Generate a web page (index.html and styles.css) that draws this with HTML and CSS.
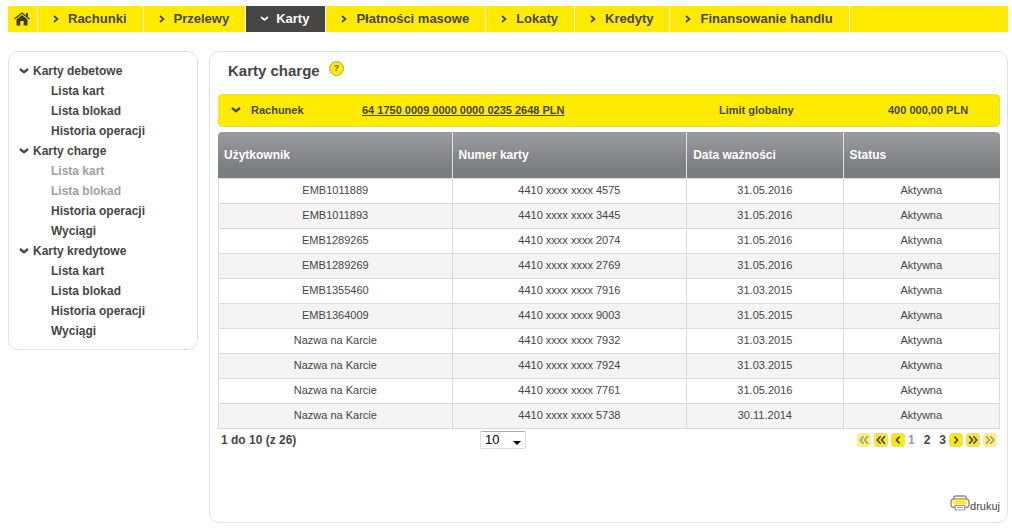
FILE: index.html
```html
<!DOCTYPE html>
<html lang="pl">
<head>
<meta charset="utf-8">
<title>Karty charge</title>
<link rel="stylesheet" href="styles.css">
</head>
<body>
<svg class="defs" aria-hidden="true">
  <symbol id="right" viewBox="0 0 6 8"><path d="M1 1l3.5 3L1 7" fill="none" stroke="currentColor" stroke-width="1.7"/></symbol>
  <symbol id="down" viewBox="0 0 10 6"><path d="M1 1l4 3.2L9 1" fill="none" stroke="currentColor" stroke-width="2.3"/></symbol>
  <symbol id="one" viewBox="0 0 14 14"><path d="M8.8 3L5.2 7l3.6 4" fill="none" stroke="currentColor" stroke-width="2"/></symbol>
  <symbol id="two" viewBox="0 0 14 14"><path d="M6.6 2.500L2.600 7l4 4.500M11.600 2.500L7.600 7l4 4.500" fill="none" stroke="currentColor" stroke-width="1.8"/></symbol>
</svg>
<nav class="topnav">
  <a class="tab home" href="#" aria-label="Start"><svg viewBox="0 0 16 14"><path d="M0.5 7L8 1l7.500 6" fill="none" stroke="currentColor" stroke-width="1.3"/><path d="M12 1h2v4l-2-1.600zM8 3l5.500 4.600V13.500H9.700V9H6.300v4.500H2.500V7.600z" fill="currentColor"/></svg></a>
  <a class="tab" href="#"><svg class="chev"><use href="#right"/></svg>Rachunki</a>
  <a class="tab" href="#"><svg class="chev"><use href="#right"/></svg>Przelewy</a>
  <a class="tab active" href="#"><svg class="chev wide" viewBox="0 0 9 6"><path d="M1 1l3.500 3L8 1" fill="none" stroke="currentColor" stroke-width="1.700"/></svg>Karty</a>
  <a class="tab" href="#"><svg class="chev"><use href="#right"/></svg>Płatności masowe</a>
  <a class="tab" href="#"><svg class="chev"><use href="#right"/></svg>Lokaty</a>
  <a class="tab" href="#"><svg class="chev"><use href="#right"/></svg>Kredyty</a>
  <a class="tab" href="#"><svg class="chev"><use href="#right"/></svg>Finansowanie handlu</a>
</nav>
<div class="layout">
  <aside class="panel sidebar">
    <a class="group" href="#"><svg class="down"><use href="#down"/></svg>Karty debetowe</a>
    <a class="item" href="#">Lista kart</a>
    <a class="item" href="#">Lista blokad</a>
    <a class="item" href="#">Historia operacji</a>
    <a class="group" href="#"><svg class="down"><use href="#down"/></svg>Karty charge</a>
    <a class="item muted" href="#">Lista kart</a>
    <a class="item muted" href="#">Lista blokad</a>
    <a class="item" href="#">Historia operacji</a>
    <a class="item" href="#">Wyciągi</a>
    <a class="group" href="#"><svg class="down"><use href="#down"/></svg>Karty kredytowe</a>
    <a class="item" href="#">Lista kart</a>
    <a class="item" href="#">Lista blokad</a>
    <a class="item" href="#">Historia operacji</a>
    <a class="item" href="#">Wyciągi</a>
  </aside>
  <main class="panel content">
    <header class="heading"><h1>Karty charge</h1><button class="help" type="button">?</button></header>
    <section class="account">
      <svg class="down"><use href="#down"/></svg>
      <span>Rachunek</span>
      <a href="#">64 1750 0009 0000 0000 0235 2648 PLN</a>
      <span>Limit globalny</span>
      <span>400 000,00 PLN</span>
    </section>
    <table class="cards">
      <thead><tr><th class="c30">Użytkownik</th><th class="c30">Numer karty</th><th class="c20">Data ważności</th><th class="c20">Status</th></tr></thead>
      <tbody>
        <tr><td>EMB1011889</td><td>4410 xxxx xxxx 4575</td><td>31.05.2016</td><td>Aktywna</td></tr>
        <tr><td>EMB1011893</td><td>4410 xxxx xxxx 3445</td><td>31.05.2016</td><td>Aktywna</td></tr>
        <tr><td>EMB1289265</td><td>4410 xxxx xxxx 2074</td><td>31.05.2016</td><td>Aktywna</td></tr>
        <tr><td>EMB1289269</td><td>4410 xxxx xxxx 2769</td><td>31.05.2016</td><td>Aktywna</td></tr>
        <tr><td>EMB1355460</td><td>4410 xxxx xxxx 7916</td><td>31.03.2015</td><td>Aktywna</td></tr>
        <tr><td>EMB1364009</td><td>4410 xxxx xxxx 9003</td><td>31.05.2015</td><td>Aktywna</td></tr>
        <tr><td>Nazwa na Karcie</td><td>4410 xxxx xxxx 7932</td><td>31.03.2015</td><td>Aktywna</td></tr>
        <tr><td>Nazwa na Karcie</td><td>4410 xxxx xxxx 7924</td><td>31.03.2015</td><td>Aktywna</td></tr>
        <tr><td>Nazwa na Karcie</td><td>4410 xxxx xxxx 7761</td><td>31.05.2016</td><td>Aktywna</td></tr>
        <tr><td>Nazwa na Karcie</td><td>4410 xxxx xxxx 5738</td><td>30.11.2014</td><td>Aktywna</td></tr>
      </tbody>
    </table>
    <footer class="pager">
      <span class="range">1 do 10 (z 26)</span>
      <div class="size"><select aria-label="Liczba wierszy"><option>10</option><option>20</option><option>50</option></select><svg viewBox="0 0 8 4"><path d="M0 0h8L4 4z"/></svg></div>
      <div class="pages">
        <button class="step off" type="button" aria-label="Pierwsza strona" disabled><svg><use href="#two"/></svg></button>
        <button class="step mid" type="button" aria-label="Poprzednie strony"><svg><use href="#two"/></svg></button>
        <button class="step" type="button" aria-label="Poprzednia strona"><svg><use href="#one"/></svg></button>
        <span class="numbers"><a class="current" href="#">1</a><a href="#">2</a><a href="#">3</a></span>
        <button class="step next" type="button" aria-label="Następna strona"><svg><use href="#one"/></svg></button>
        <button class="step next mid" type="button" aria-label="Następne strony"><svg><use href="#two"/></svg></button>
        <button class="step next off" type="button" aria-label="Ostatnia strona" disabled><svg><use href="#two"/></svg></button>
      </div>
    </footer>
    <a class="print" href="#"><svg viewBox="0 0 20 16"><rect x="3.700" y="1" width="12.600" height="7" rx="2" fill="#fff" stroke="#8e8e8e" stroke-width="1.400"/><rect x="1" y="4" width="18" height="8.500" rx="3" fill="#fff" stroke="#8e8e8e" stroke-width="1.400"/><path d="M3.500 4.500h13v5h-13z" fill="#ffe92c"/><path d="M5 10.500h10l-.5 4.500h-9z" fill="#fff" stroke="#9a9a9a" stroke-width="1.200"/><path d="M7 12.500h6" stroke="#aaa" stroke-width="1.200"/></svg>drukuj</a>
  </main>
</div>
</body>
</html>
```

FILE: styles.css
```css
* { box-sizing: border-box; }
body {
  margin: 0;
  padding: 6px 4px 7px 8px;
  background: #fff;
  color: #464646;
  font: 11px/16px "Liberation Sans", Arial, sans-serif;
}
a { color: inherit; text-decoration: none; }
.defs { display: none; }

.topnav {
  display: flex;
  height: 26px;
  background: #ffeb00;
  font-size: 13px;
  font-weight: bold;
}
.tab {
  display: flex;
  align-items: center;
  padding: 0 16px 0 15px;
  border-right: 1px solid #fff;
  white-space: nowrap;
}
.tab.home { padding: 0 7px 0 6px; color: #3c3a10; }
.home svg { width: 16px; height: 14px; }
.tab.active { padding-left: 14px; background: #464646; color: #fff; }
.chev { width: 6px; height: 8px; margin-right: 9px; }
.chev.wide { width: 9px; height: 6px; margin-right: 7px; }

.layout {
  display: flex;
  align-items: flex-start;
  gap: 11px;
  margin-top: 19px;
}
.panel { border: 1px solid #e2e2e2; border-radius: 10px; }
.sidebar {
  flex: 0 0 190px;
  padding: 9px 10px 8px;
  font-size: 12px;
  line-height: 20px;
  font-weight: bold;
}
.group, .item { display: flex; align-items: center; }
.group { gap: 4px; }
.item { padding-left: 32px; }
.muted { color: #a0a0a0; }
.down { flex: none; width: 10px; height: 6px; }

.content { flex: 1; min-width: 0; padding: 8px 7px 8px 8px; }
.heading { display: flex; gap: 9px; padding-left: 10px; margin-bottom: 12px; }
h1 { margin: 0; font-size: 15px; line-height: 22px; }
.help {
  width: 15px;
  height: 15px;
  margin-top: 1px;
  padding: 0;
  border: 1px solid #a8a46a;
  border-radius: 50%;
  background: #ffeb00;
  color: #6b6520;
  font: bold 9px/13px "Liberation Sans", Arial, sans-serif;
}
.account {
  display: grid;
  grid-template-columns: 20px 111px 1fr 169px 111px;
  align-items: center;
  height: 33px;
  padding: 0 0 2px 12px;
  border: 1px solid #e6dc50;
  border-radius: 4px;
  background: #ffeb00;
  font-weight: bold;
}
.account a { text-decoration: underline; }

.cards {
  width: 100%;
  margin-top: 5px;
  border-spacing: 0;
  table-layout: fixed;
}
.c30 { width: 30%; }
.c20 { width: 20%; }
th {
  height: 47px;
  padding: 0 6px;
  border-right: 1px solid #e4e4e6;
  border-bottom: 1px solid #d8dbe0;
  background: linear-gradient(#9b9c9f, #7c7d80 80%);
  color: #fff;
  font-size: 12px;
  text-align: left;
}
th:first-child { border-top-left-radius: 4px; }
th:last-child { border-top-right-radius: 4px; border-right: 0; }
td {
  height: 25px;
  padding: 0 0 2px;
  border-right: 1px solid #d8dbe0;
  border-bottom: 1px solid #d8dbe0;
  text-align: center;
}
td:first-child { border-left: 1px solid #d8dbe0; }
tbody tr:nth-child(even) { background: #f4f4f4; }

.pager {
  display: grid;
  grid-template-columns: 259px 1fr auto;
  align-items: center;
  margin-top: 2px;
  padding: 0 3px;
}
.range { font-size: 12px; font-weight: bold; }
.size { position: relative; width: 46px; height: 18px; }
.size select {
  display: block;
  width: 100%;
  height: 100%;
  padding: 0 4px;
  appearance: none;
  border: 1px solid #d6dbe4;
  border-top-color: #abadb3;
  border-radius: 2px;
  background: #fff;
  color: #000;
  font: 13px/16px "Liberation Sans", Arial, sans-serif;
}
.size svg { position: absolute; right: 5px; bottom: 4px; width: 8px; height: 4px; pointer-events: none; }
.pages { display: flex; align-items: center; gap: 3px; font-size: 12px; }
.numbers { display: flex; gap: 9px; font-weight: bold; }
.current { color: #999; }
.step {
  width: 14px;
  height: 14px;
  padding: 0;
  border: 1px solid #e0dc98;
  border-radius: 3px;
  background: #ffeb00;
  color: #4d4318;
}
.step svg { display: block; width: 12px; height: 12px; }
.step.next svg { transform: rotate(180deg); }
.step.mid { background: #f6e635; }
.step.off { opacity: 0.55; }

.print {
  display: flex;
  align-items: flex-end;
  justify-content: flex-end;
  margin-top: 46px;
}
.print svg { width: 20px; height: 16px; margin-bottom: 3px; }
```
